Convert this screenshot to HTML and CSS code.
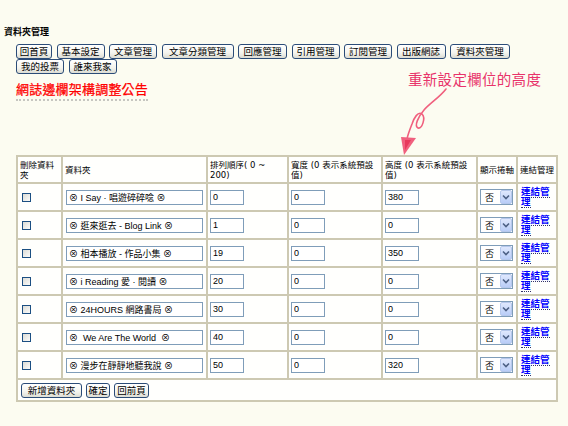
FILE: index.html
```html
<!DOCTYPE html>
<html lang="zh-Hant">
<head>
<meta charset="utf-8">
<title>資料夾管理</title>
<link rel="stylesheet" href="styles.css">
</head>
<body>
<div class="page">
  <div class="title">資料夾管理</div>
  <div class="toolbar">
    <button class="btn w36">回首頁</button>
    <button class="btn w48">基本設定</button>
    <button class="btn w48">文章管理</button>
    <button class="btn w72">文章分類管理</button>
    <button class="btn w49">回應管理</button>
    <button class="btn w48">引用管理</button>
    <button class="btn w48">訂閱管理</button>
    <button class="btn w49">出版網誌</button>
    <button class="btn w60">資料夾管理</button>
    <button class="btn w48">我的投票</button>
    <button class="btn w48">誰來我家</button>
  </div>
  <div class="notice"><span class="notice-text">網誌邊欄架構調整公告</span></div>

  <div class="annot">重新設定欄位的高度</div>
  <svg class="arrow" viewBox="378 86 80 72" width="80" height="72">
    <path d="M446 89 C440 97 430 103 424 110 C418 117 414 126 418 128 C422 129 426 118 422 114 C418 111 414 118 412 124 C410 129 408 134 407 139" fill="none" stroke="#f0607e" stroke-width="1.6" stroke-linecap="round"/>
    <polygon points="401,137 416,138 404,155" fill="#f0607e"/>
    <polygon points="405,140 411,140 405,150" fill="#e8385c"/>
  </svg>

  <table class="grid">
    <colgroup>
      <col class="c1"><col class="c2"><col class="c3"><col class="c4"><col class="c5"><col class="c6"><col class="c7">
    </colgroup>
    <tr class="head">
      <th>刪除資料夾</th>
      <th>資料夾</th>
      <th>排列順序( 0 ~ 200)</th>
      <th>寬度 (0 表示系統預設值)</th>
      <th>高度 (0 表示系統預設值)</th>
      <th class="tight">顯示捲軸</th>
      <th class="tight">連結管理</th>
    </tr>
    <tr>
      <td><input type="checkbox" class="chk"></td>
      <td><input type="text" class="txt name" value="⊗ I Say · 唱遊碎碎唸 ⊗"></td>
      <td><input type="text" class="txt num" value="0"></td>
      <td><input type="text" class="txt num" value="0"></td>
      <td><input type="text" class="txt num" value="380"></td>
      <td><span class="sel"><select><option>否</option><option>是</option></select><span class="sel-btn"><svg viewBox="0 0 8 6" width="8" height="6"><polyline points="1,1.5 4,4.5 7,1.5" fill="none" stroke="#4d6185" stroke-width="1.6"/></svg></span></span></td>
      <td><a class="lnk" href="#">連結管理</a></td>
    </tr>
    <tr>
      <td><input type="checkbox" class="chk"></td>
      <td><input type="text" class="txt name" value="⊗ 逛來逛去 - Blog Link ⊗"></td>
      <td><input type="text" class="txt num" value="1"></td>
      <td><input type="text" class="txt num" value="0"></td>
      <td><input type="text" class="txt num" value="0"></td>
      <td><span class="sel"><select><option>否</option><option>是</option></select><span class="sel-btn"><svg viewBox="0 0 8 6" width="8" height="6"><polyline points="1,1.5 4,4.5 7,1.5" fill="none" stroke="#4d6185" stroke-width="1.6"/></svg></span></span></td>
      <td><a class="lnk" href="#">連結管理</a></td>
    </tr>
    <tr>
      <td><input type="checkbox" class="chk"></td>
      <td><input type="text" class="txt name" value="⊗ 相本播放 - 作品小集 ⊗"></td>
      <td><input type="text" class="txt num" value="19"></td>
      <td><input type="text" class="txt num" value="0"></td>
      <td><input type="text" class="txt num" value="350"></td>
      <td><span class="sel"><select><option>否</option><option>是</option></select><span class="sel-btn"><svg viewBox="0 0 8 6" width="8" height="6"><polyline points="1,1.5 4,4.5 7,1.5" fill="none" stroke="#4d6185" stroke-width="1.6"/></svg></span></span></td>
      <td><a class="lnk" href="#">連結管理</a></td>
    </tr>
    <tr>
      <td><input type="checkbox" class="chk"></td>
      <td><input type="text" class="txt name" value="⊗ i Reading 愛 · 閱讀 ⊗"></td>
      <td><input type="text" class="txt num" value="20"></td>
      <td><input type="text" class="txt num" value="0"></td>
      <td><input type="text" class="txt num" value="0"></td>
      <td><span class="sel"><select><option>否</option><option>是</option></select><span class="sel-btn"><svg viewBox="0 0 8 6" width="8" height="6"><polyline points="1,1.5 4,4.5 7,1.5" fill="none" stroke="#4d6185" stroke-width="1.6"/></svg></span></span></td>
      <td><a class="lnk" href="#">連結管理</a></td>
    </tr>
    <tr>
      <td><input type="checkbox" class="chk"></td>
      <td><input type="text" class="txt name" value="⊗ 24HOURS 網路書局 ⊗"></td>
      <td><input type="text" class="txt num" value="30"></td>
      <td><input type="text" class="txt num" value="0"></td>
      <td><input type="text" class="txt num" value="0"></td>
      <td><span class="sel"><select><option>否</option><option>是</option></select><span class="sel-btn"><svg viewBox="0 0 8 6" width="8" height="6"><polyline points="1,1.5 4,4.5 7,1.5" fill="none" stroke="#4d6185" stroke-width="1.6"/></svg></span></span></td>
      <td><a class="lnk" href="#">連結管理</a></td>
    </tr>
    <tr>
      <td><input type="checkbox" class="chk"></td>
      <td><input type="text" class="txt name" value="⊗  We Are The World  ⊗"></td>
      <td><input type="text" class="txt num" value="40"></td>
      <td><input type="text" class="txt num" value="0"></td>
      <td><input type="text" class="txt num" value="0"></td>
      <td><span class="sel"><select><option>否</option><option>是</option></select><span class="sel-btn"><svg viewBox="0 0 8 6" width="8" height="6"><polyline points="1,1.5 4,4.5 7,1.5" fill="none" stroke="#4d6185" stroke-width="1.6"/></svg></span></span></td>
      <td><a class="lnk" href="#">連結管理</a></td>
    </tr>
    <tr>
      <td><input type="checkbox" class="chk"></td>
      <td><input type="text" class="txt name" value="⊗ 漫步在靜靜地聽我說 ⊗"></td>
      <td><input type="text" class="txt num" value="50"></td>
      <td><input type="text" class="txt num" value="0"></td>
      <td><input type="text" class="txt num" value="320"></td>
      <td><span class="sel"><select><option>否</option><option>是</option></select><span class="sel-btn"><svg viewBox="0 0 8 6" width="8" height="6"><polyline points="1,1.5 4,4.5 7,1.5" fill="none" stroke="#4d6185" stroke-width="1.6"/></svg></span></span></td>
      <td><a class="lnk" href="#">連結管理</a></td>
    </tr>
    <tr class="foot">
      <td colspan="7">
        <div class="foot-btns">
          <button class="btn w61">新增資料夾</button>
          <button class="btn w24">確定</button>
          <button class="btn w35">回前頁</button>
        </div>
      </td>
    </tr>
  </table>
</div>
</body>
</html>
```
FILE: styles.css
```css
html, body {
  margin: 0;
  background: #fcfcf1;
}
body {
  font-family: "Liberation Sans", "Noto Sans CJK TC", "DejaVu Sans", sans-serif;
  font-size: 9px;
  color: #000;
}
.page {
  position: relative;
  padding: 27px 0 0 4px;
  height: 426px;
  box-sizing: border-box;
}
.title {
  font-weight: bold;
  font-size: 9px;
  line-height: 11px;
}
.toolbar {
  display: flex;
  flex-wrap: wrap;
  column-gap: 4.5px;
  row-gap: 0;
  margin: 6px 0 0 12px;
  width: 496px;
}
.btn {
  height: 15px;
  padding: 0;
  margin: 0;
  font-family: "Liberation Sans", "Noto Sans CJK TC", sans-serif;
  font-size: 9.5px;
  line-height: 13px;
  color: #000;
  border: 1px solid #2b4c78;
  border-radius: 3px;
  background: linear-gradient(#ffffff, #f4f4ee 60%, #dcdcd3);
  box-sizing: border-box;
}
.w24 { width: 24px; }
.w35 { width: 35px; }
.w36 { width: 36px; }
.w48 { width: 48px; }
.w49 { width: 49px; }
.w60 { width: 60px; }
.w61 { width: 61px; }
.w72 { width: 72px; }

.notice {
  margin: 8px 0 0 12px;
}
.notice-text {
  display: inline-block;
  font-size: 13px;
  line-height: 16px;
  letter-spacing: 0.2px;
  color: #ff0000;
  padding-bottom: 1px;
  border-bottom: 2px dotted #c6c6c0;
  -webkit-text-stroke: 0.25px #ff0000;
}
.annot {
  position: absolute;
  left: 408px;
  top: 72px;
  font-size: 14.5px;
  line-height: 17px;
  letter-spacing: 0.3px;
  color: #e8336a;
}
.arrow {
  position: absolute;
  left: 378px;
  top: 86px;
}

.grid {
  margin: 54px 0 0 12px;
  width: 542px;
  table-layout: fixed;
  border-collapse: separate;
  border-spacing: 0;
  border-top: 2px solid #cdc9b2;
  border-left: 2px solid #cdc9b2;
}
.c1 { width: 45px; }
.c2 { width: 145px; }
.c3 { width: 81px; }
.c4 { width: 94px; }
.c5 { width: 95px; }
.c6 { width: 40px; }
.c7 { width: 40px; }
.grid th, .grid td {
  border-right: 2px solid #cdc9b2;
  border-bottom: 2px solid #cdc9b2;
  padding: 0 2px;
  background: #fffffd;
  text-align: left;
  font-weight: normal;
  vertical-align: middle;
  font-size: 9px;
  line-height: 10px;
}
.grid th {
  font-family: "DejaVu Sans", "Noto Sans CJK TC", sans-serif;
  font-size: 8.5px;
}
.grid th.tight { padding: 0 1px 0 2px; }
.grid tr { height: 28px; }
.grid tr.head { height: 27px; }
.grid tr.foot { height: 22px; }

.chk {
  appearance: none;
  -webkit-appearance: none;
  width: 9px;
  height: 9px;
  margin: 0 0 0 2px;
  border: 1px solid #1c4f82;
  background: linear-gradient(135deg, #dcdcd6, #fbfbf9);
  box-sizing: border-box;
  vertical-align: middle;
}
.txt {
  height: 15px;
  box-sizing: border-box;
  border: 1px solid #7f9db9;
  background: #fff;
  padding: 0 2px;
  margin: 0;
  font-family: "Liberation Sans", "Noto Sans CJK TC", "DejaVu Sans", sans-serif;
  font-size: 9px;
  color: #000;
  vertical-align: middle;
}
.name { width: 137px; margin-left: 1px; }
.num { width: 34px; }

.sel {
  position: relative;
  display: inline-block;
  width: 33px;
  height: 16px;
  vertical-align: middle;
}
.sel select {
  appearance: none;
  -webkit-appearance: none;
  width: 33px;
  height: 16px;
  box-sizing: border-box;
  border: 1px solid #7f9db9;
  background: #fff;
  padding: 0 0 0 4px;
  margin: 0;
  font-family: "Noto Sans CJK TC", sans-serif;
  font-size: 9px;
  color: #000;
  border-radius: 0;
}
.sel-btn {
  position: absolute;
  right: 1px;
  top: 1px;
  bottom: 1px;
  width: 12px;
  border-radius: 2px;
  background: linear-gradient(#dfe8fd, #b9cdf7);
  border: 1px solid #b6c8ec;
  box-sizing: border-box;
  display: flex;
  align-items: center;
  justify-content: center;
}
.lnk {
  color: #0000ff;
  font-weight: bold;
  font-size: 9.5px;
  line-height: 9.5px;
  text-decoration: none;
  border-bottom: 1px dotted #33336a;
}
.grid td:last-child { padding-left: 3px; }
.foot-btns {
  display: flex;
  gap: 4px;
}
```
